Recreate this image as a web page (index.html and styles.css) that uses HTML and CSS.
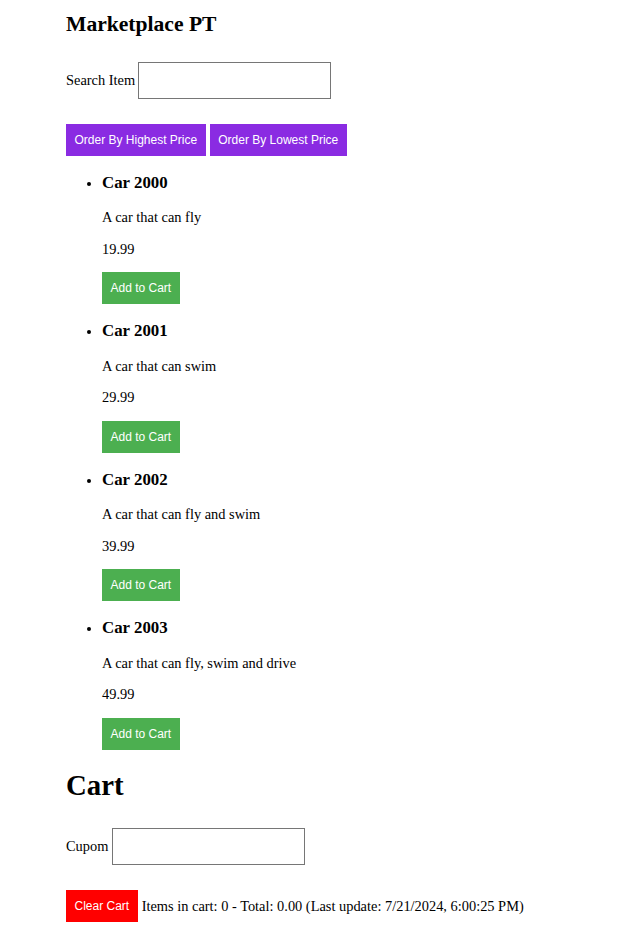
FILE: index.html
```html
<!DOCTYPE html>
<html lang="en">
<head>
<meta charset="utf-8">
<title>Marketplace PT</title>
<link rel="stylesheet" href="styles.css">
</head>
<body>
<div class="page">
  <h2 class="title">Marketplace PT</h2>
  <div class="field-row search-row">
    <label class="field-label" for="search">Search Item</label>
    <input class="field-input" id="search" type="text">
  </div>
  <div class="sort-row">
    <button class="btn btn-purple">Order By Highest Price</button>
    <button class="btn btn-purple">Order By Lowest Price</button>
  </div>
  <ul class="products">
    <li class="product">
      <h3 class="product-name">Car 2000</h3>
      <p class="product-text">A car that can fly</p>
      <p class="product-text">19.99</p>
      <button class="btn btn-green">Add to Cart</button>
    </li>
    <li class="product">
      <h3 class="product-name">Car 2001</h3>
      <p class="product-text">A car that can swim</p>
      <p class="product-text">29.99</p>
      <button class="btn btn-green">Add to Cart</button>
    </li>
    <li class="product">
      <h3 class="product-name">Car 2002</h3>
      <p class="product-text">A car that can fly and swim</p>
      <p class="product-text">39.99</p>
      <button class="btn btn-green">Add to Cart</button>
    </li>
    <li class="product">
      <h3 class="product-name">Car 2003</h3>
      <p class="product-text">A car that can fly, swim and drive</p>
      <p class="product-text">49.99</p>
      <button class="btn btn-green">Add to Cart</button>
    </li>
  </ul>
  <h1 class="cart-title">Cart</h1>
  <div class="field-row cupom-row">
    <label class="field-label" for="cupom">Cupom</label>
    <input class="field-input" id="cupom" type="text">
  </div>
  <div class="cart-row">
    <button class="btn btn-red">Clear Cart</button>
    <span class="cart-info">Items in cart: 0 - Total: 0.00 (Last update: 7/21/2024, 6:00:25 PM)</span>
  </div>
</div>
</body>
</html>
```
FILE: styles.css
```css
html, body {
  margin: 0;
  padding: 0;
  background: #ffffff;
}

body {
  font-family: "Liberation Serif", "Times New Roman", serif;
  font-size: 14.4px;
  color: #000000;
}

.page {
  padding: 12px 0 20px 66px;
}

.title {
  font-size: 21.6px;
  font-weight: bold;
  margin: 0 0 25px 0;
}

.field-row {
  display: flex;
  align-items: center;
  gap: 3px;
}

.cupom-row {
  gap: 3.8px;
}

.field-input {
  box-sizing: border-box;
  width: 193px;
  height: 37px;
  border: 1px solid #767676;
  border-radius: 0;
  background: #ffffff;
  padding: 0 6px;
  margin: 0;
  font-family: "Liberation Sans", Arial, sans-serif;
  font-size: 12px;
}

.sort-row {
  display: flex;
  gap: 4px;
  margin-top: 25px;
}

.btn {
  border: none;
  border-radius: 0;
  color: #ffffff;
  font-family: "Liberation Sans", Arial, sans-serif;
  font-size: 12px;
  line-height: 14px;
  padding: 9px 8.5px;
  margin: 0;
  cursor: pointer;
}

.btn-purple {
  background: #8a2be2;
}

.btn-green {
  background: #4caf50;
  display: block;
}

.btn-red {
  background: #ff0000;
}

.products {
  margin: 0 0 14.4px 0;
  padding-left: 36px;
}

.product + .product {
  padding-top: 0.4px;
}

.product-name {
  font-size: 16.85px;
  font-weight: bold;
  margin: 16.5px 0 16.85px 0;
}

.product-text {
  margin: 14.4px 0;
}

.cart-title {
  font-size: 28.8px;
  font-weight: bold;
  margin: 19.8px 0 26px 0;
}

.cart-row {
  display: flex;
  align-items: center;
  gap: 4px;
  margin-top: 25px;
}
```
